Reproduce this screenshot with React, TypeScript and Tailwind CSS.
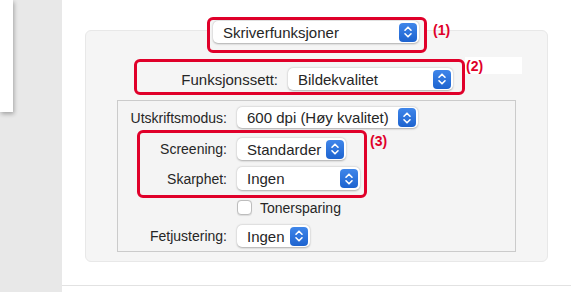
import React from 'react';

const Stepper: React.FC = () => (
  <div className="flex h-[19px] w-[18px] items-center justify-center rounded-[4px] bg-gradient-to-b from-[#3f86ea] to-[#1d63cf]">
    <svg width="10" height="14" viewBox="0 0 10 14" fill="none">
      <path d="M2 5.2 L5 2.2 L8 5.2" stroke="white" strokeWidth="1.6" strokeLinecap="round" strokeLinejoin="round" />
      <path d="M2 8.8 L5 11.8 L8 8.8" stroke="white" strokeWidth="1.6" strokeLinecap="round" strokeLinejoin="round" />
    </svg>
  </div>
);

// popup button, macOS style
const Popup: React.FC<{ value: string; width: string; height?: string }> = ({ value, width, height = 'h-[22px]' }) => (
  <div className={`flex ${width} ${height} shrink-0 items-center justify-between rounded-[5px] bg-white pl-[10px] pr-[2px] shadow-[0_0.5px_2px_rgba(0,0,0,0.3)]`}>
    <span className="text-[15px] leading-none text-[#262626]">{value}</span>
    <Stepper />
  </div>
);

const Label: React.FC<{ children: React.ReactNode; width: string; size?: string }> = ({ children, width, size = 'text-[14px]' }) => (
  <span className={`${width} ${size} shrink-0 text-right leading-none text-[#262626]`}>{children}</span>
);

const Tag: React.FC<{ children: React.ReactNode }> = ({ children }) => (
  <span className="text-[14px] font-bold leading-none text-[#e0002a]">{children}</span>
);

export default function App() {
  return (
    <div className="flex h-[292px] w-[571px] overflow-hidden font-['Liberation_Sans',Arial,sans-serif]">
      {/* side column */}
      <div className="w-[62px] shrink-0 bg-[#e8e8e8]">
        <div className="h-[112px] w-[13px] bg-white shadow-[1px_2px_4px_rgba(0,0,0,0.3)]" />
      </div>

      <div className="flex flex-1 flex-col bg-white">
        <div className="ml-[23px] mt-[30px] h-[232px] w-[463px] rounded-[6px] border border-[#e8e8e8] bg-[#f5f5f5]">
          {/* (1) */}
          <div className="ml-[121px] mt-[-14px] flex items-start">
            <div className="h-[36px] w-[220px] rounded-[6px] border-[3px] border-[#e0002a] bg-[#f5f5f5] pl-[3px] pt-[1px]">
              <Popup value="Skriverfunksjoner" width="w-[206px]" />
            </div>
            <div className="ml-[6px] mt-[1px]">
              <Tag>(1)</Tag>
            </div>
          </div>

          {/* (2) */}
          <div className="ml-[48px] mt-[6px] flex items-start">
            <div className="flex h-[36px] w-[331px] items-center justify-end gap-[10px] rounded-[6px] border-[3px] border-[#e0002a] pr-[9px] pt-[4px]">
              <Label width="" size="text-[15px]">Funksjonssett:</Label>
              <Popup value="Bildekvalitet" width="w-[165px]" />
            </div>
            <div className="mt-[-2px] flex h-[17px] w-[57px] items-center bg-white pl-[1px]">
              <Tag>(2)</Tag>
            </div>
          </div>

          {/* group box */}
          <div className="ml-[31px] mt-[5px] h-[152px] w-[399px] border border-[#cbcbcb] bg-[#f4f4f4]">
            <div className="mt-[6px] flex items-center gap-[10px]">
              <Label width="w-[109px]">Utskriftsmodus:</Label>
              <Popup value="600 dpi (Høy kvalitet)" width="w-[181px]" height="h-[21px]" />
            </div>

            <div className="ml-[19px] mt-[2px] flex items-start">
              <div className="h-[68px] w-[230px] rounded-[6px] border-[3px] border-[#e0002a]">
                <div className="mt-[5px] flex items-center gap-[10px]">
                  <Label width="w-[87px]">Screening:</Label>
                  <Popup value="Standarder" width="w-[109px]" />
                </div>
                <div className="mt-[7px] flex items-center gap-[10px]">
                  <Label width="w-[87px]">Skarphet:</Label>
                  <Popup value="Ingen" width="w-[123px]" height="h-[23px]" />
                </div>
              </div>
              <div className="ml-[3px] mt-[-1px]">
                <Tag>(3)</Tag>
              </div>
            </div>

            <div className="ml-[119px] mt-[2px] flex items-center gap-[8px]">
              <div className="h-[15px] w-[15px] rounded-[4px] border border-[#bdbdbd] bg-white shadow-[0_0.5px_1px_rgba(0,0,0,0.1)]" />
              <span className="text-[14px] leading-none text-[#262626]">Tonersparing</span>
            </div>

            <div className="mt-[10px] flex items-center gap-[10px]">
              <Label width="w-[109px]">Fetjustering:</Label>
              <Popup value="Ingen" width="w-[73px]" />
            </div>
          </div>
        </div>
        <div className="mt-[23px] h-px bg-[#e2e2e2]" />
      </div>
    </div>
  );
}
